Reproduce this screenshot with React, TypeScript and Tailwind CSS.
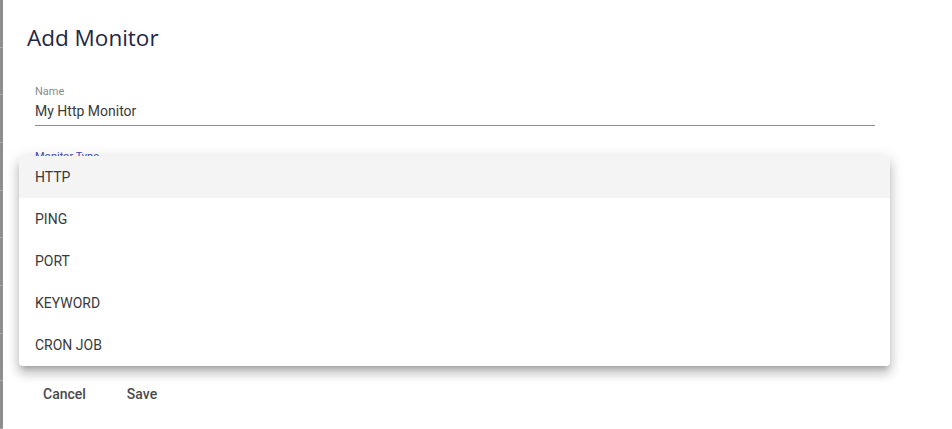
const monitorTypes = ["HTTP", "PING", "PORT", "KEYWORD", "CRON JOB"];

function Field({ label, value, focused }: { label: string; value: string; focused?: boolean }) {
  return (
    <div className="w-[840px]">
      <div className={"text-[11px] leading-[14px] " + (focused ? "text-[#3f51b5]" : "text-[#8a8a8a]")}>
        {label}
      </div>
      <div className="pt-[2px] pb-[4px] text-[14px] leading-[20px] text-[#3a3a3a]">{value}</div>
      <div className={"h-px " + (focused ? "bg-[#3f51b5]" : "bg-[#8c8c8c]")} />
    </div>
  );
}

export default function App() {
  return (
    <div className="flex h-[429px] w-[952px] bg-white font-['Roboto',sans-serif]">
      {/* page behind the dialog */}
      <div className="flex w-[3px] flex-col bg-[#8e8e8e]">
        {[0, 1, 2, 3, 4, 5, 6, 7, 8].map((i) => (
          <div key={i} className="h-[48px] border-b border-[#a8a8a8]" />
        ))}
      </div>

      <div className="relative h-[427px] flex-1 rounded-bl-[4px] bg-white">
        <h2 className="pl-[24px] pt-[23px] font-['Open_Sans',sans-serif] text-[22.5px] leading-[30px] text-[#1f2745]">
          Add Monitor
        </h2>

        <div className="flex flex-col gap-[24px] pl-[32px] pt-[32px]">
          <Field label="Name" value="My Http Monitor" />
          <Field label="Monitor Type" value="HTTP" focused />
        </div>

        <div className="flex gap-[25px] pl-[32px] pt-[187px]">
          <button className="rounded px-[8px] py-[6px] text-[14px] font-medium leading-[20px] text-[#4a4a4a]">
            Cancel
          </button>
          <button className="rounded px-[8px] py-[6px] text-[14px] font-medium leading-[20px] text-[#4a4a4a]">
            Save
          </button>
        </div>

        {/* open select menu */}
        <ul className="absolute left-[16px] top-[156px] w-[871px] overflow-hidden rounded-[4px] bg-white shadow-[0_5px_5px_-3px_rgba(0,0,0,0.2),0_8px_10px_1px_rgba(0,0,0,0.14),0_3px_14px_2px_rgba(0,0,0,0.12)]">
          {monitorTypes.map((t, i) => (
            <li
              key={t}
              className={
                "flex h-[42px] items-center pl-[16px] text-[14px] text-[#3a3a3a] " +
                (i === 0 ? "bg-[#f4f4f4]" : "")
              }
            >
              {t}
            </li>
          ))}
        </ul>
      </div>
    </div>
  );
}
